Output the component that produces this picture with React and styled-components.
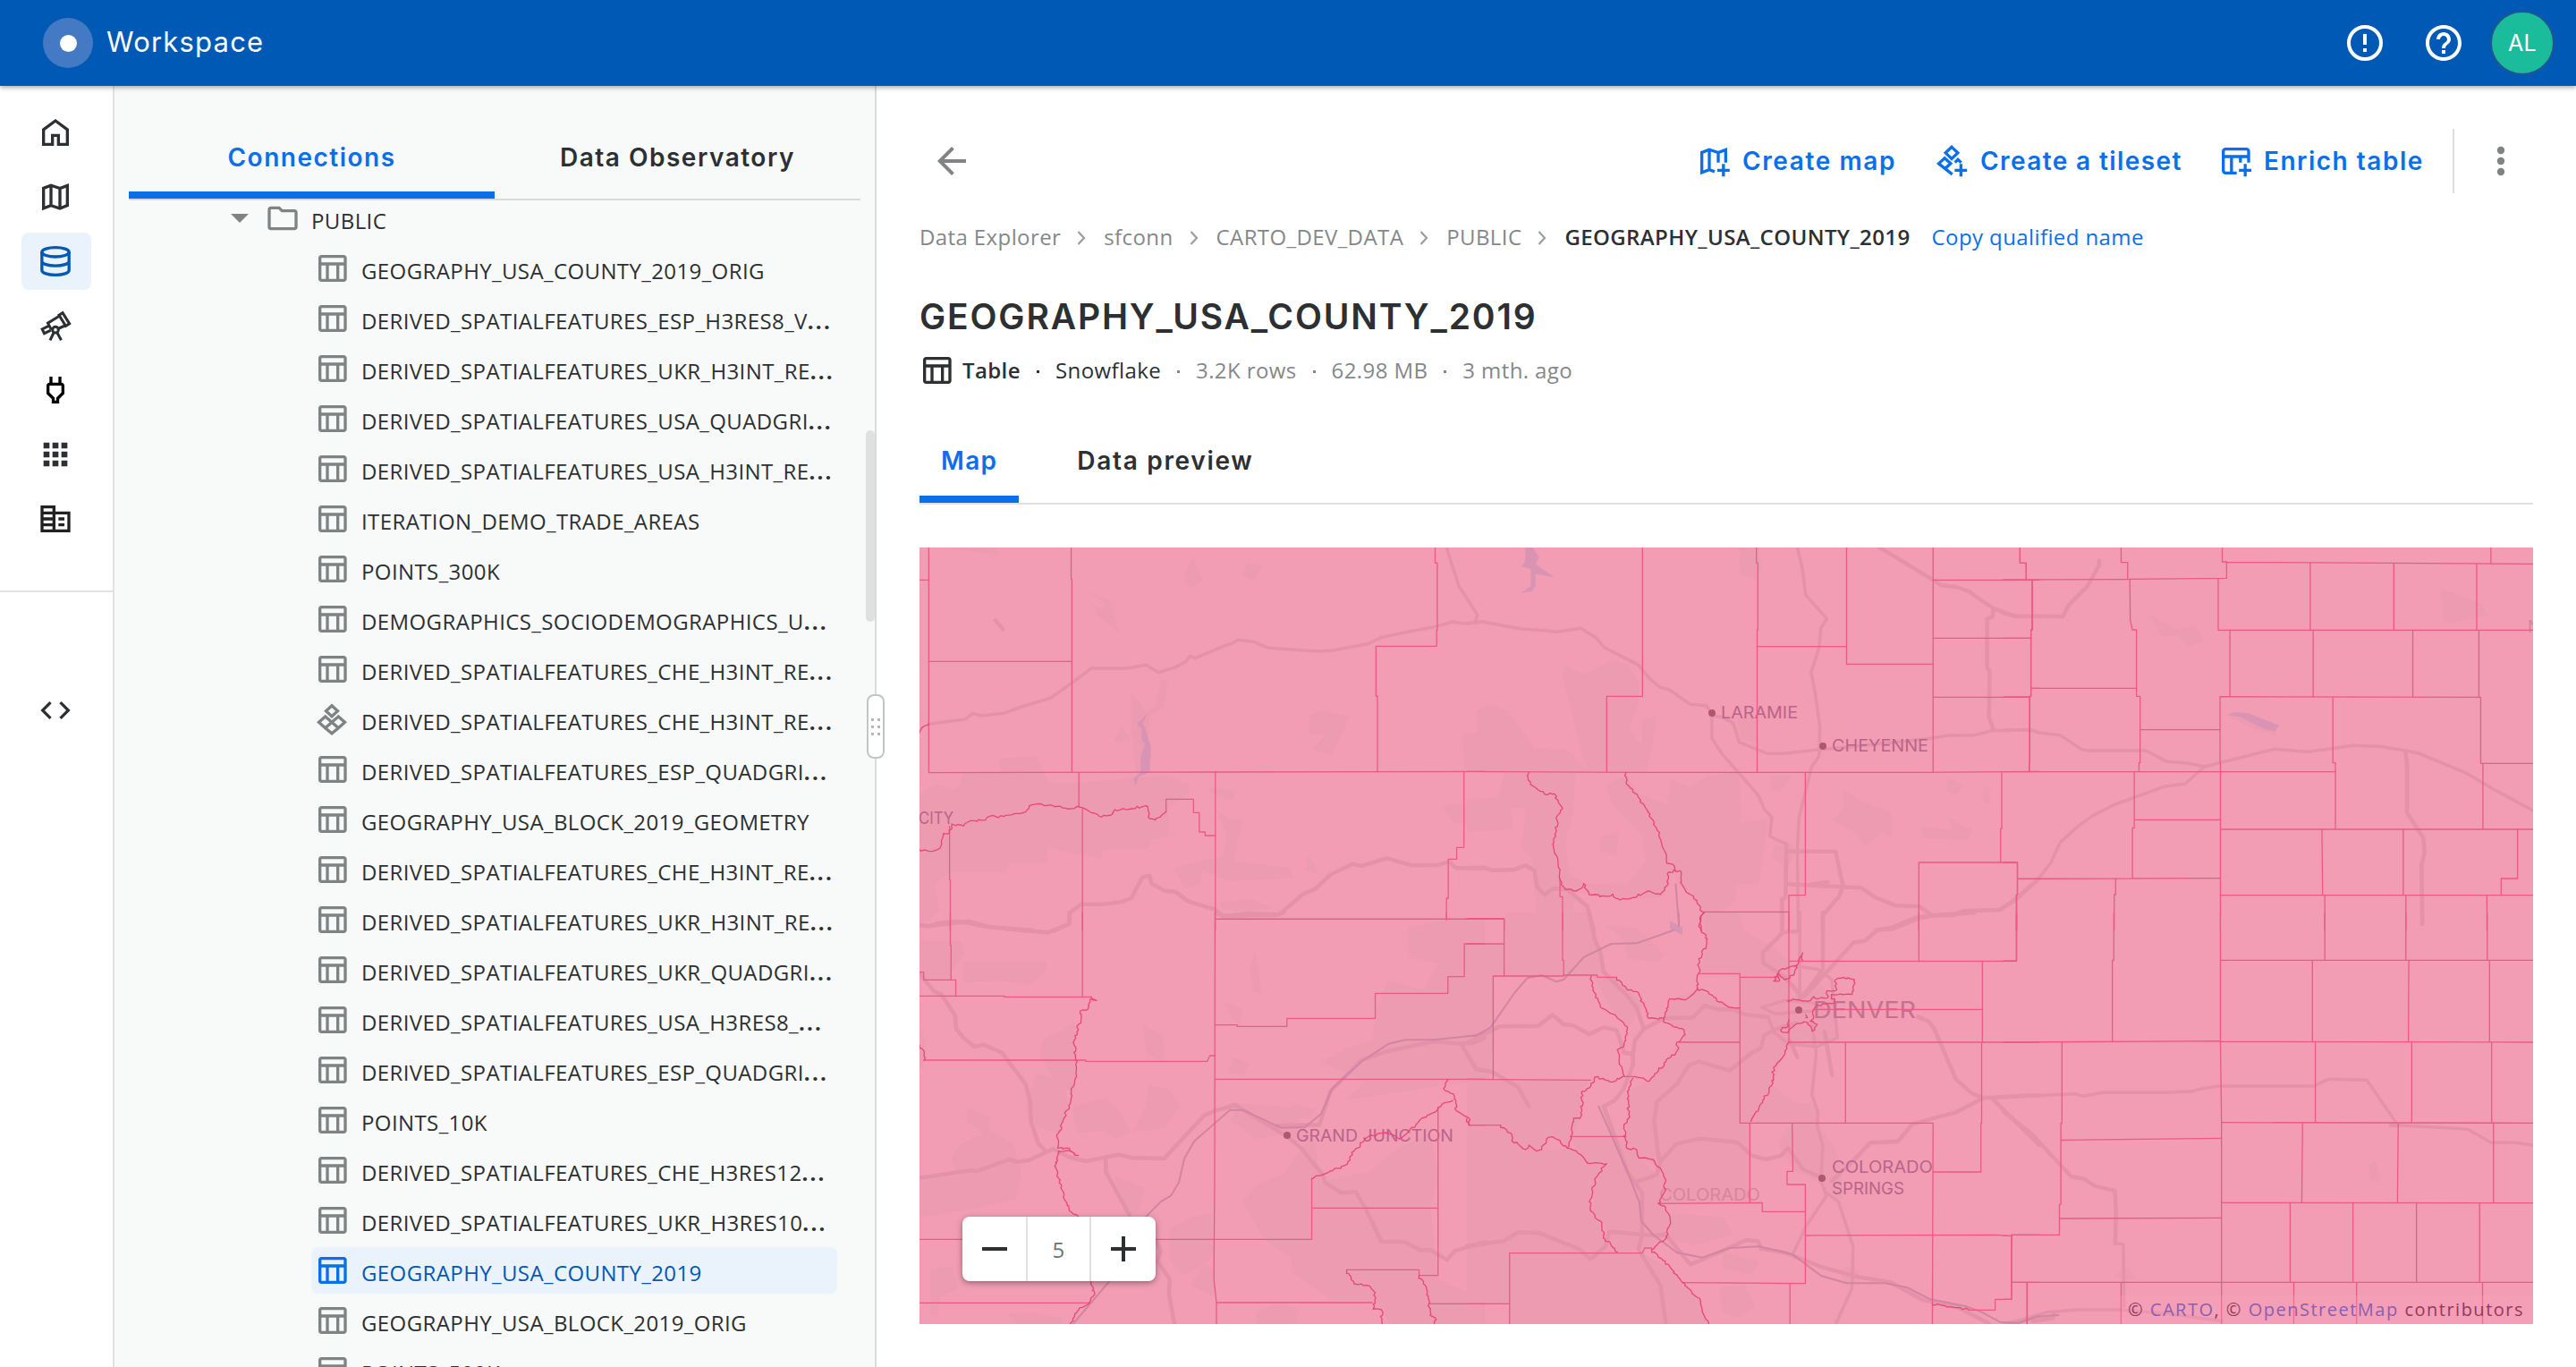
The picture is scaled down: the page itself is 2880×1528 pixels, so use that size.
import React from "react";
import styled, { createGlobalStyle, css } from "styled-components";

const GlobalStyle = createGlobalStyle`
  * { box-sizing: border-box; }
  html, body { margin: 0; padding: 0; }
  body {
    width: 2880px;
    height: 1528px;
    overflow: hidden;
    background: #fff;
    color: #2c3032;
    font-family: "Open Sans", "Noto Sans", sans-serif;
    font-size: 24px;
    letter-spacing: 0.4px;
  }
`;

const heading = css`
  font-family: "Inter", "Roboto", sans-serif;
`;

/* ---------- shell ---------- */

const Page = styled.div`
  display: flex;
  flex-direction: column;
  width: 2880px;
  height: 1528px;
  overflow: hidden;
`;

const Header = styled.header`
  display: flex;
  align-items: center;
  flex: 0 0 96px;
  padding: 0 24px 0 48px;
  background: #0059b4;
  box-shadow: 0 2px 5px rgba(44, 48, 50, 0.4);
  z-index: 2;
`;

const Logo = styled.div`
  display: flex;
  align-items: center;
  justify-content: center;
  width: 56px;
  height: 56px;
  border-radius: 50%;
  background: #447ac4;
`;

const LogoDot = styled.div`
  width: 19px;
  height: 19px;
  border-radius: 50%;
  background: #fff;
`;

const Brand = styled.div`
  ${heading}
  flex: 1;
  margin-left: 15px;
  padding-bottom: 2px;
  color: #fff;
  font-size: 31px;
  font-weight: 400;
  line-height: 40px;
  letter-spacing: 1.2px;
`;

const HeaderIcons = styled.div`
  display: flex;
  align-items: center;
  gap: 40px;
  margin-right: 28px;
  color: #fff;
`;

const Avatar = styled.div`
  ${heading}
  display: flex;
  align-items: center;
  justify-content: center;
  width: 72px;
  height: 72px;
  border: 2px solid #20578f;
  border-radius: 50%;
  background: #1abc9c;
  color: #fff;
  font-size: 25px;
`;

const Body = styled.div`
  display: flex;
  flex: 1;
  min-height: 0;
`;

/* ---------- rail ---------- */

const Rail = styled.nav`
  display: flex;
  flex-direction: column;
  flex: 0 0 128px;
  border-right: 2px solid #e1e2e2;
`;

const RailGroup = styled.div`
  display: flex;
  flex-direction: column;
  gap: 8px;
  padding: ${(p) => p.$pad}px 24px 48px;
  border-bottom: ${(p) => (p.$divided ? "2px solid #e1e2e2" : "none")};
`;

const RailItem = styled.div`
  display: flex;
  align-items: center;
  justify-content: center;
  width: 78px;
  height: 64px;
  padding-right: 2px;
  border-radius: 8px;
  background: ${(p) => (p.$active ? "#eaf2fc" : "transparent")};
  color: ${(p) => p.$color || "#2c3032"};
`;

const Icon = styled.svg`
  display: block;
  flex: none;
  width: ${(p) => p.$size || 40}px;
  height: ${(p) => p.$size || 40}px;
  fill: currentColor;
`;

const Line = styled(Icon)`
  fill: none;
  stroke: currentColor;
  stroke-width: ${(p) => p.$w || 2};
`;

const HomeIcon = () => (
  <Line viewBox="0 0 24 24"><path d="M4 20V10.1l8-5.9 8 5.9V20h-6v-6h-4v6z" /></Line>
);
const MapIcon = () => (
  <Line viewBox="0 0 24 24"><path d="M4 6.2l5-1.9 6 2 5-1.9v13.4l-5 2-6-2-5 1.9zM9 4.3v13.5M15 6.3v13.5" /></Line>
);
const DatabaseIcon = () => (
  <Line viewBox="0 0 24 24">
    <ellipse cx="12" cy="5.9" rx="9.1" ry="3.1" />
    <path d="M2.9 5.9v12.2c0 1.7 4.1 3.1 9.1 3.1s9.1-1.4 9.1-3.1V5.9M2.9 12c0 1.7 4.1 3.1 9.1 3.1s9.1-1.4 9.1-3.1" />
  </Line>
);
const TelescopeIcon = () => (
  <Line viewBox="0 0 24 24" $w={1.8}>
    <path d="M14.4 4.9l2.4-1.5 4.6 7.3-2.5 1.5zM14.6 5.6L6.9 10.3l2.3 4.3M18.4 12l-4.2 1.8M7.4 12.2l-4.3 2.1 1.4 2.9 4.4-2.1" />
    <circle cx="12" cy="14.8" r="2" />
    <path d="M10.8 16.8l-2.4 5M13.2 16.8l2.7 5" />
  </Line>
);
const PlugIcon = () => (
  <Icon viewBox="0 0 24 24"><path d="M16 9v4.66l-3.5 3.51V19h-1v-1.83L8 13.65V9h8m0-6h-2v4h-4V3H8v4h-.01C6.9 6.99 6 7.89 6 8.99v5.52L9.5 18v3h5v-3l3.5-3.51V9c0-1.1-.9-2-2-2V3z" /></Icon>
);
const AppsIcon = () => (
  <Icon viewBox="0 0 24 24"><path d="M4 8h4V4H4zm6 12h4v-4h-4zm-6 0h4v-4H4zm0-6h4v-4H4zm6 0h4v-4h-4zm6-10v4h4V4zm-6 4h4V4h-4zm6 6h4v-4h-4zm0 6h4v-4h-4z" /></Icon>
);
const BusinessIcon = () => (
  <Icon viewBox="0 0 24 24"><path fillRule="evenodd" d="M12 7V3H2v18h20V7zM10 19H4v-2h6zM10 15H4v-2h6zM10 11H4V9h6zM10 7H4V5h6zM20 19h-8V9h8zM18 11h-4v2h4zM18 15h-4v2h4z" /></Icon>
);
const CodeIcon = () => (
  <Icon viewBox="0 0 24 24"><path d="M9.4 16.6L4.8 12l4.6-4.6L8 6l-6 6 6 6 1.4-1.4zm5.2 0l4.6-4.6-4.6-4.6L16 6l6 6-6 6-1.4-1.4z" /></Icon>
);
const TableIcon = () => (
  <Icon viewBox="0 0 24 24"><path d="M20 3H5c-1.1 0-2 .9-2 2v14c0 1.1.9 2 2 2h15c1.1 0 2-.9 2-2V5c0-1.1-.9-2-2-2zm0 2v3H5V5h15zm-5 14h-5v-9h5v9zM5 10h3v9H5v-9zm12 9v-9h3v9h-3z" /></Icon>
);
const FolderIcon = () => (
  <Icon viewBox="0 0 24 24"><path d="M9.17 6l2 2H20v10H4V6h5.17M10 4H4c-1.1 0-1.99.9-1.99 2L2 18c0 1.1.9 2 2 2h16c1.1 0 2-.9 2-2V8c0-1.1-.9-2-2-2h-8l-2-2z" /></Icon>
);
const TilesetIcon = () => (
  <Line viewBox="0 0 24 24"><path d="M12 2.9l3.9 3.6-3.9 3.6-3.9-3.6zM3.3 14l4.3-3.8L12 14l-4.4 3.8zM12 14l4.4-3.8 4.3 3.8-4.3 3.8zM7.6 17.8l4.4 3.7 4.4-3.7" /></Line>
);
const AddMapIcon = () => (
  <Line viewBox="0 0 24 24"><path d="M12.6 19.1L9 17.8l-5 1.9V6.2l5-1.9 6 2 5-1.9V13M9 4.3v13.5M15 6.3V13M18.5 14v8.4M14.4 18.2h8.3" /></Line>
);
const AddTilesetIcon = () => (
  <Line viewBox="0 0 24 24"><path d="M12 2.6l4.1 3.9-4.1 3.9-4.1-3.9zM12.4 20.9L3.3 13.7l4-3.7 4 3.7-3.9 3.6M14.2 13l2-2 2.2 2M18.2 14v8.4M14 18.2h8.3" /></Line>
);
const AddTableIcon = () => (
  <Line viewBox="0 0 24 24"><path d="M13 20H5.5A1.5 1.5 0 0 1 4 18.500V5.500A1.500 1.500 0 0 1 5.500 4h14A1.500 1.500 0 0 1 21 5.500V13M4 9h17M9.500 9v11M15.500 9v4M18.700 14v8.400M14.500 18.200h8.300" /></Line>
);
const AlertIcon = () => (
  <Line viewBox="0 0 24 24" $size={48}><circle cx="12" cy="12" r="9" /><path d="M12 7v6M12 15v2" /></Line>
);
const HelpIcon = () => (
  <Icon viewBox="0 0 24 24" $size={48}><path d="M11 18h2v-2h-2v2zm1-16C6.480 2 2 6.480 2 12s4.480 10 10 10 10-4.480 10-10S17.520 2 12 2zm0 18c-4.410 0-8-3.590-8-8s3.590-8 8-8 8 3.590 8 8-3.590 8-8 8zm0-14c-2.210 0-4 1.790-4 4h2c0-1.100.900-2 2-2s2 .900 2 2c0 2-3 1.750-3 5h2c0-2.250 3-2.500 3-5 0-2.210-1.790-4-4-4z" /></Icon>
);
const BackIcon = () => (
  <Icon viewBox="0 0 24 24" $size={48}><path d="M20 11H7.830l5.590-5.590L12 4l-8 8 8 8 1.410-1.410L7.830 13H20v-2z" /></Icon>
);
const MoreIcon = () => (
  <Icon viewBox="0 0 24 24" $size={48}><circle cx="12" cy="6" r="2.100" /><circle cx="12" cy="12" r="2.100" /><circle cx="12" cy="18" r="2.100" /></Icon>
);

/* ---------- connections panel ---------- */

const Panel = styled.aside`
  position: relative;
  display: flex;
  flex-direction: column;
  flex: 0 0 852px;
  padding: 40px 16px 0;
  border-right: 2px solid #d9dbdb;
  background: #f8faf9;
`;

const PanelTabs = styled.div`
  display: flex;
  flex: 0 0 88px;
  border-bottom: 2px solid #d9dbdb;
`;

const Tab = styled.div`
  ${heading}
  display: flex;
  flex: ${(p) => (p.$fill ? "1" : "none")};
  align-items: center;
  justify-content: center;
  padding: 1px ${(p) => (p.$fill ? 0 : 24)}px 0;
  border-bottom: 8px solid ${(p) => (p.$active ? "#0a6fe8" : "transparent")};
  color: ${(p) => (p.$active ? "#0a6fe8" : "#2c3032")};
  font-size: 28px;
  font-weight: 600;
  letter-spacing: ${(p) => p.$ls}px;
  white-space: nowrap;
`;

const Tree = styled.div`
  display: flex;
  flex-direction: column;
  flex: 1;
  min-height: 0;
  overflow: hidden;
  margin-top: -8px;
`;

const FolderRow = styled.div`
  display: flex;
  align-items: center;
  flex: 0 0 56px;
  padding-left: 114px;
  color: #7f8384;
`;

const Caret = styled.div`
  width: 0;
  height: 0;
  margin-right: 18px;
  border-left: 10px solid transparent;
  border-right: 10px solid transparent;
  border-top: 10px solid #7f8384;
`;

const Row = styled.div`
  display: flex;
  align-items: center;
  flex: 0 0 52px;
  width: 588px;
  margin: 2px 0 2px 204px;
  padding-left: 3px;
  border-radius: 8px;
  background: ${(p) => (p.$active ? "#eaf2fc" : "transparent")};
  color: ${(p) => (p.$active ? "#0a6fe8" : "#7f8384")};
`;

const RowLabel = styled.span`
  margin-left: ${(p) => p.$gap || 13}px;
  padding-top: 5px;
  color: ${(p) => (p.$active ? "#0059b4" : "#2c3032")};
  font-size: 24px;
  line-height: 34px;
  white-space: nowrap;
`;

const Dots = styled.span`
  font-weight: 700;
  letter-spacing: 2.2px;
`;

const ScrollThumb = styled.div`
  position: absolute;
  top: 385px;
  right: 0;
  width: 10px;
  height: 214px;
  border-radius: 5px;
  background: #dee1e0;
`;

const Handle = styled.div`
  position: absolute;
  top: 680px;
  right: -11px;
  display: grid;
  grid-template-columns: 3px 3px;
  gap: 5px 4px;
  align-content: center;
  justify-content: center;
  width: 20px;
  height: 72px;
  border: 2px solid #c2c5c6;
  border-radius: 8px;
  background: #fff;
  z-index: 1;
`;

const Grip = styled.i`
  width: 3px;
  height: 3px;
  background: #b4b8b9;
`;

/* ---------- main ---------- */

const Main = styled.main`
  display: flex;
  flex-direction: column;
  flex: 1;
  min-width: 0;
  padding: 48px 48px 0;
`;

const Toolbar = styled.div`
  display: flex;
  align-items: center;
  flex: 0 0 72px;
  padding: 0 12px;
  color: #7f8384;
`;

const Actions = styled.div`
  display: flex;
  align-items: center;
  gap: 41px;
  height: 72px;
  margin-left: auto;
  margin-right: 28px;
  padding-right: 33px;
  border-right: 2px solid #dcdede;
  color: #0a6fe8;
`;

const Action = styled.div`
  ${heading}
  display: flex;
  align-items: center;
  gap: 12px;
  font-size: 28px;
  font-weight: 600;
  white-space: nowrap;
`;

const ActionText = styled.span`
  width: ${(p) => p.$w}px;
  letter-spacing: ${(p) => p.$ls}px;
`;

const Crumbs = styled.div`
  display: flex;
  align-items: center;
  flex: 0 0 32px;
  margin-top: 33px;
  color: #84888a;
`;

const Crumb = styled.span`
  line-height: 32px;
  white-space: nowrap;
  color: ${(p) => p.$color || "inherit"};
  font-weight: ${(p) => (p.$bold ? 600 : 400)};
  margin-left: ${(p) => p.$ml || 0}px;
`;

const ChevronSvg = styled.svg`
  width: 10px;
  height: 16px;
  margin: 1px 20px 0 18px;
  fill: none;
  stroke: #9a9da0;
  stroke-width: 2.2;
`;
const Chevron = () => (
  <ChevronSvg viewBox="0 0 10 16"><path d="M1.500 1l6.500 7-6.500 7" /></ChevronSvg>
);

const Title = styled.h1`
  ${heading}
  flex: 0 0 56px;
  margin: 45px 0 0;
  font-size: 39px;
  font-weight: 600;
  line-height: 56px;
  letter-spacing: 1.85px;
`;

const Meta = styled.div`
  display: flex;
  align-items: center;
  flex: 0 0 40px;
  margin: 12px 0 0 -1px;
  color: #84888a;
`;

const MetaText = styled.span`
  line-height: 40px;
  white-space: nowrap;
  color: ${(p) => (p.$dark ? "#2c3032" : "inherit")};
  font-weight: ${(p) => (p.$bold ? 600 : 400)};
  margin-left: ${(p) => p.$ml || 0}px;
`;

const Dot = styled.i`
  width: 3px;
  height: 3px;
  margin: 2px 18px 0;
  background: ${(p) => (p.$dark ? "#2c3032" : "#84888a")};
`;

const Tabs = styled.div`
  display: flex;
  gap: 41px;
  flex: 0 0 90px;
  margin-top: 40px;
  border-bottom: 2px solid #dfe1e1;
`;

const MapCard = styled.div`
  position: relative;
  flex: 0 0 868px;
  margin-top: 48px;
  overflow: hidden;
  background: #f29db4;
`;

const MapSvg = styled.svg`
  display: block;
  width: 1804px;
  height: 868px;
  letter-spacing: 0;
`;

const ZoomBox = styled.div`
  position: absolute;
  left: 48px;
  bottom: 48px;
  display: flex;
  width: 216px;
  height: 72px;
  border-radius: 8px;
  background: #fff;
  box-shadow: 0 2px 6px rgba(44, 48, 50, 0.5);
`;

const ZoomCell = styled.div`
  display: flex;
  align-items: center;
  justify-content: center;
  flex: 0 0 ${(p) => p.$w}px;
  color: ${(p) => (p.$muted ? "#6b7275" : "#2c3032")};
  border-left: ${(p) => (p.$muted ? "2px solid #dfe1e1" : "none")};
  border-right: ${(p) => (p.$muted ? "2px solid #dfe1e1" : "none")};
  font-size: 24px;
`;

const ZoomGlyph = ({ plus }) => (
  <Line viewBox="0 0 28 28" $size={28} $w={4}><path d={plus ? "M0 14h28M14 0v28" : "M0 14h28"} /></Line>
);

const Attribution = styled.div`
  position: absolute;
  right: 0;
  bottom: 0;
  height: 32px;
  padding: 0 10px 0 8px;
  background: rgba(255, 160, 190, 0.28);
  color: #903c59;
  font-size: 20px;
  line-height: 32px;
  letter-spacing: 1.500px;
  white-space: nowrap;
`;

const Credit = styled.span`
  color: #8a60ae;
`;

/* ---------- map data ---------- */

// Each tile has its own anisotropic grid: 2.45 units per px across, 3 down.
const TILES = [
  {
    x: 1020, y: 600,
    land: ["75 36 230 36 235 62 130 42", "770 72 795 145 760 172 744 150 750 110", "917 88 958 98 936 150 905 130", "450 168 540 215 568 325 505 262 496 230 530 245 520 212", "1088 600 1120 582 1198 602 1148 733 1098 712 1130 665 1088 665", "600 520 640 585 665 570 682 480 700 478 690 570 650 600 640 790 612 790 600 640", "572 632 598 680 550 688", "240 742 340 736 372 822 460 824 690 800 757 828 757 860 700 910 700 1005 655 1015 645 1050 520 1050 518 1080 370 1042 370 1092 260 1098 258 1125 102 1125 60 1165 74 1255 40 1290 20 1290 20 860 65 830 118 850 145 790 240 790", "716 1110 850 1070 890 1090 1033 1110 1046 1143 870 1155 790 1120 790 1165 745 1175", "808 840 882 852 882 885 831 870", "831 915 870 945 903 950 880 1100 848 1090 862 1000", "1085 1065 1112 1130 1075 1120", "1568 570 1545 605 1552 655 1508 660 1512 780 1568 790", "1568 880 1452 902 1485 960 1568 968", "840 1225 930 1215 985 1245 920 1258 850 1250"],
    water: ["645 590 632 625 640 650 654 705 650 790 620 805 612 835 605 810 625 790 625 740 637 695 628 680 628 645 615 628"],
    roads: ["45 628 145 612 165 592 190 600 250 592 300 570 380 540 437 490 490 441 590 441 640 430 675 455 720 438 750 418 760 400 775 407 850 368 880 355 890 346 935 352 975 373 1110 384 1150 381 1245 360 1285 338 1350 320 1430 302 1480 285 1510 291 1568 286", "1463 36 1497 165 1548 262 1540 288"],
    wide: ["20 1300 45 1307 70 1296 120 1290 160 1296 200 1307 330 1320", "390 1320 430 1298 430 1262 462 1232 520 1232 570 1225 600 1212 630 1142 650 1137 655 1162 690 1187 720 1190 755 1222 830 1250 850 1272 920 1264 1005 1267 1070 1198 1105 1180 1145 1133 1205 1097 1230 1104 1300 1078 1370 1102 1440 1100 1470 1090 1490 1111 1568 1110", "228 280 248 310"],
    lines: ["M45 36V791L831 789 1568 787", "M20 145H45", "M435 36V142H437V790", "M45 418H437", "M1432 36V88H1438V312H1436V367H1270V534H1274V787", "M456 790V907M466 910V1320", "M102 970V1150H104V1320", "M830 787V1320", "M1511 787V1042H1491V1081H1468V1212H1463V1284", "M831 1282H1568", "M695 922V880H770V925H786V990H802V1002H830"],
    rough: ["20 658 32 635 45 628", "20 1049 50 1055 75 1045 85 995 102 992 108 963 140 970 160 952 200 950 210 938 250 938 310 923 320 902 350 895 390 905 420 910 456 905 490 925 512 938 550 928 555 915 600 912 640 902 650 945 665 950 695 922"],
  },
  {
    x: 1640, y: 600,
    land: ["268 432 322 463 395 415 440 428 475 490 470 560 443 642 480 700 490 790 330 790 262 470", "480 610 520 603 505 720 490 790 480 790", "0 660 40 655 25 585 65 562 112 585 185 708 275 712 330 787 0 787", "745 36 800 36 808 100 795 145 750 128", "795 605 795 690 750 680 740 610", "105 790 298 790 290 930 270 1010 280 1130 330 1165 440 1162 490 1090 480 1000 400 900 380 830 440 800 470 860 550 900 560 815 610 840 660 800 746 790 750 960 825 945 800 1165 740 1165 735 1220 690 1270 645 1257 600 1190 560 1125 540 1210 430 1215 300 1190 290 1260 190 1260 180 1080 150 1045 162 910 118 905 126 980 0 990 0 880 85 875", "365 1005 417 990 410 1070 365 1050", "840 1040 890 1030 900 1060 880 1108 835 1080", "1030 845 1075 885 1160 920 1165 1010 1140 990 1090 1035 1060 990 1000 950 1035 910", "1245 972 1330 985 1320 945 1385 985 1370 1015 1250 1010", "1320 810 1360 830 1340 868 1312 850", "1415 830 1435 850 1430 900 1415 890", "685 1150 720 1210 700 1255 660 1150", "830 800 890 800 860 855 835 850"],
    water: ["160 36 180 36 198 68 188 92 240 136 188 125 188 165 178 183 147 189 175 165 175 108 150 100 160 80", "557 1288 590 1310 590 1335 557 1315"],
    roads: ["0 290 40 284 145 308 210 314 248 319 312 307 355 340 375 370 470 430 500 475 530 505 555 513 612 562 655 566 671 592", "671 600 671 675 700 730 740 785 800 870 815 915 835 940 830 1005 875 1030", "700 605 730 625 745 688 820 726 870 727 960 714 1000 710 1260 678 1320 666 1390 665 1440 650 1540 648 1568 656", "905 36 918 100 928 195 986 275 970 305 965 370 943 455 955 530 967 640 965 735 945 770 910 940 905 1050 908 1320", "671 600 700 605"],
    wide: ["875 1030 873 1210 863 1215 863 1320", "1130 36 1170 65 1277 145 1300 163 1340 168 1375 183 1420 222 1442 240 1440 268 1425 275 1425 440 1432 450 1430 605 1442 645", "1442 240 1500 266 1568 266", "875 1055 1010 1055 1030 1170 1020 1205 975 1270 975 1320", "875 1165 1080 1177 1120 1210 1175 1237 1240 1240 1275 1270 1335 1268 1360 1255 1460 1251 1505 1215 1568 1145", "1275 1270 1230 1277 1160 1312 1120 1320", "940 1166 988 1158", "0 1112 45 1110 70 1118 130 1116 160 1102 185 1118 192 1175 213 1200 235 1180 275 1183 330 1240 348 1320"],
    rail: ["572 1165 581 1305"],
    lines: ["M0 787L480 790H1240L1568 787", "M481 36V535H383V790", "M793 36V88H797V312H795V790", "M795 368H1040M1040 36V427H1277", "M1277 36V787", "M1277 145H1568M1515 36V88H1532V145", "M1549 145V312H1545V535H1541V787", "M1277 340H1545M1277 538H1541M1546 508H1568", "M255 1145V1207H262V1320", "M927 790V1202H882V1320", "M645 1258H882", "M1465 790V979H1462V1092M1238 1320V1092H1508V1200H1505V1320M1508 1147H1568", "M0 1280H102V1320"],
    rough: ["170 790 168 815 180 835 200 853 220 865 240 862 250 890 262 912 248 935 245 985 235 1030 250 1100 255 1150 270 1183 300 1188 320 1163 335 1200 380 1205 400 1198 420 1218 455 1210 500 1188 530 1200 548 1170 552 1125 567 1117 587 1125 585 1160 600 1190 630 1220 645 1257", "436 790 438 830 460 860 490 910 520 980 540 1050 548 1095 565 1100 570 1117", "650 1260 638 1280 641 1320"],
  },
  {
    x: 2240, y: 600,
    land: ["400 260 475 312 528 298 546 348 508 370 475 330 432 334", "1197 173 1312 225 1326 264 1206 292", "612 600 650 608 748 652 745 665 690 648"],
    water: ["612 598 630 588 670 592 755 632 743 652 715 646 650 605"],
    roads: ["0 648 75 648 97 657 155 665 212 712 230 717 390 717 448 754 510 760 550 771 740 712 830 721 900 710 955 700 1030 703 1100 717 1135 725 1270 794 1340 845 1450 918", "550 771 498 828 440 838 360 873 300 900 245 935 205 970 155 1025 130 1092 97 1145 40 1205 0 1245"],
    wide: ["0 256 35 267 162 267 178 230 230 165 262 95 262 80", "1100 717 1105 760 1105 925 1150 1010 1153 1060 1145 1100 1147 1298"],
    lines: ["M45 36V88H62V145", "M0 144L346 143", "M322 36V86H340V142", "M346 142L611 139V84H599V36M611 85L1450 91", "M1335 36V88", "M78 145V312H75V535H72V760H70V787", "M0 340H75M0 537H72", "M346 143L347 280 353 312H364V535H374V758H371V787", "M75 508H364", "M588 141V313H1450M840 88V313M1069 90V313M1296 92V313", "M620 313V535M848 313V536M1121 313V537M1302 315V538", "M594 787V758H593V536L1307 538V760H1450", "M902 538V758H909V980M1313 760V980", "M374 647H592", "M0 788H909M594 787V1320M594 981H1450", "M872 981L874 1202M1095 981V1202M1408 981V1146H1363V1202M594 1202H1450", "M358 788V976H353V1145M358 949H594M38 1147L594 1145", "M0 1092H38V1200H36V1320M307 1146V1200H303V1320M880 1202V1320M1102 1202V1320M1324 1202V1320"],
    rough: [],
  },
  {
    x: 1020, y: 1020,
    land: ["20 95 130 95 142 140 110 190 100 225 20 225", "143 165 367 165 367 195 320 243 240 228 143 235", "20 375 38 440 40 490 20 535", "150 655 215 690 210 730 275 770 300 870 285 960 180 990 90 1010 20 1020 20 900 130 880 105 830 130 780 195 740 150 700", "340 540 400 560 430 640 400 740 340 720 310 650", "440 650 530 620 570 670 600 740 640 650 645 580 700 590 735 645 690 725 600 735 560 760 520 730 450 740", "630 375 685 410 688 498 645 480", "355 430 445 370 445 600 400 590 350 480", "940 125 957 272 935 265 925 185", "855 300 908 325 895 378 870 345", "880 485 922 505 905 545 862 535", "1358 50 1463 25 1568 25 1568 560 1190 625 1240 570 1190 540 1120 500 1190 455 1260 430 1268 340 1300 230 1400 260 1440 170 1358 150", "1180 630 1400 590 1400 560 1300 555", "905 970 945 910 1015 880 1075 770 1020 740 940 760 900 720 870 700 900 640 1030 650 1100 760 1120 900 1250 870 1330 790 1420 740 1440 900 1420 990 1440 1230 1568 1300 1568 1380 1310 1380 1268 1300 1150 1300 1040 1205 1040 1160 960 1090", "1040 1100 1180 1075 1175 1150 1230 1200 1268 1275 1150 1300 1040 1200", "702 1060 770 1020 820 1010 825 1150 800 1180 740 1215 705 1160", "50 1200 110 1185 125 1260 75 1290 70 1350 50 1350", "760 1250 800 1180 830 1200 830 1290", "550 880 635 925 625 990 600 1015 570 950", "940 1340 1000 1312 1060 1330 1050 1380 945 1380", "260 1345 330 1340 410 1360 410 1380 290 1380", "1040 640 1105 660 1090 690 1030 690"],
    water: [],
    wide: ["20 42 45 45 155 30 205 47 300 60 370 67 430 38 432 0", "20 205 60 265 80 275 117 345 120 390 140 420 170 450 195 443 245 470 310 575 322 630 325 700 345 775 365 800", "20 890 160 865 178 867 265 828 285 836 320 830 385 793 430 820 475 834 565 812 600 822 690 825 735 765 800 680 830 665 885 645 930 680 1026 750 1065 790 1125 880 1130 905 1175 940 1215 937 1240 990 1285 1103 1350 1105 1390 1132 1420 1132 1465 1165 1485 1135 1568 1105", "530 820 530 870 595 1015", "668 1100 680 1135 672 1170 705 1230 703 1280 718 1380", "1000 715 1115 712 1145 600 1230 495 1300 465 1430 432 1500 440 1540 436 1568 420", "1505 445 1545 525 1568 530", "835 5 860 12 1000 8 1018 0"],
    roads: [],
    rail: ["640 1020 680 970 708 950 730 905 745 825 772 767 870 662 905 662 1010 722 1075 720 1120 675 1150 590 1230 500 1305 440 1350 427 1430 427 1545 412 1568 398", "540 1236 440 1380"],
    lines: ["M20 280H252V283H490", "M104 0V110H106V225M466 0V283", "M20 200H31V226H119V280", "M829 0L828 900 826 1230 833 1308V1380M830 22H1568", "M1463 0V24M1568 105H1512V215H1467V271H1268V355H1026V382H890V377H830", "M31 495H475V499H808L815 480H830", "M830 559H1568", "M20 1096H1094V892M1094 991H1440M1440 652V1217H1388V1198H1190", "M20 1309H485M833 1308H1260M1415 1312H1568M1525 713H1568"],
    rough: ["20 445 33 470 33 495", "490 283 505 295 487 290 480 325 460 330 462 360 455 375 443 430 448 495 450 550 435 590 433 640 415 690 400 740 398 790 430 790 455 815 435 800 400 800 398 830 390 850 400 890 410 930 418 965 430 1000 455 1020 460 1100 475 1180 490 1240 500 1280 485 1310 445 1345 432 1380", "1094 892 1185 848 1210 800 1250 750 1300 738 1335 760 1380 710 1440 655 1480 630", "1468 560 1455 590 1485 615 1490 665 1525 690 1525 713", "1190 1198 1210 1245 1245 1250 1268 1275 1262 1330 1285 1332 1287 1380", "1388 1217 1405 1250 1415 1312 1418 1350 1435 1365 1430 1380"],
  },
  {
    x: 1640, y: 1020,
    land: ["0 105 102 105 105 213 72 213 72 440 60 559 0 559", "0 562 340 562 315 600 310 690 275 790 235 752 190 800 160 795 92 713 0 713", "0 713 92 713 190 800 275 790 383 842 335 970 378 1095 413 1140 117 1142 117 1312 0 1312", "117 1142 480 1142 560 1195 640 1305 663 1380 117 1380", "262 0 335 0 350 90 365 130 375 200 357 210 265 210", "105 0 262 0 262 210 105 213", "345 213 410 217 485 310 440 385 410 350", "378 40 470 55 540 140 520 165 440 155 430 90", "650 0 745 0 760 60 830 110 882 160 882 215 748 217 637 205 655 120", "555 290 632 260 748 330 748 435 590 435 598 400 540 360", "500 565 580 435 748 435 748 706 775 706 775 973 700 973 524 975 545 900 520 850 470 822 438 790 440 600", "285 751 437 751 470 822 545 900 524 975 557 1030 548 1090 487 1125 413 1140 370 1040 345 1005 350 895 383 842 300 800", "748 217 882 217 882 435 865 485 748 480", "748 480 865 485 835 580 900 640 960 640 960 706 748 706", "882 290 960 230 1010 300 1010 430 930 450 882 430", "850 770 891 707 960 700 1020 820 1030 960 1000 960 960 900 900 870", "557 1010 700 1020 730 1080 620 1115 545 1090", "690 1255 760 1250 790 1320 740 1360 700 1340", "700 1140 800 1170 780 1215 700 1190", "1022 1200 1060 1180 1080 1230 1040 1250"],
    water: ["557 30 590 50 590 75 557 55"],
    roads: ["912 0 912 290", "945 370 957 470 945 610 962 670 960 720 975 780 970 900 985 950 930 1050 895 1140", "985 940 1018 970 1058 1120 1055 1260 1010 1380", "808 318 870 295 940 300 990 330", "808 318 845 340 950 330", "900 180 960 190 1000 225 1005 300 1015 420 960 450 880 440 840 400 825 350"],
    wide: ["0 437 90 382 195 380 235 343 265 375 290 378 335 408 375 385 410 395 420 430 430 470 455 475 460 430 485 390 540 355 620 352 650 312 690 325 730 325 760 342 825 350", "335 0 350 90 365 130 375 200 440 280 465 320 485 390", "455 475 455 510 430 590 405 630 375 650 440 870 480 940 480 1080 470 1130 530 1250 545 1380", "0 475 25 525 70 535 140 585 170 650", "0 1118 100 1102 140 1072 200 1075 310 1130 338 1163 380 1120 390 1070 510 1083 545 1080 612 1180 690 1140 765 1098 798 1102 805 1127 870 1140 975 1190 1065 1220 1160 1240 1250 1300 1330 1315 1430 1378", "863 0 863 70 810 135 812 170 870 215 912 275", "863 66 912 62", "975 0 975 190 915 290", "1390 0 1275 10 1238 20 1165 55 1125 58 1090 95 1060 100 1000 180 925 280", "900 370 850 390 815 410 805 455 780 470 720 530 635 500 608 512 575 575 520 635 513 700 525 820 530 835", "460 905 520 880 530 835 575 775 640 758 740 770 780 815 820 828 860 815 880 790 920 860 972 890", "1235 350 1265 365 1280 390 1340 560 1385 608 1415 622 1340 670 1300 682 1220 710 1180 768 1105 772 1060 830 1000 900", "1415 622 1568 612", "1440 625 1568 780", "980 400 1000 545", "885 430 905 485"],
    rail: ["0 415 25 413 65 385 130 270 165 220 205 210 245 232 265 225 320 150 395 105 465 103 565 60", "580 0 581 45", "361 650 440 870 472 970 478 1035 510 1080 575 1140 645 1157 720 1125 800 1120 890 1145 970 1218 1040 1243 1145 1243 1205 1257 1270 1297 1365 1320 1410 1340 1460 1373 1510 1378 1568 1353"],
    lines: ["M0 22H102V213", "M0 105H102M72 559V213H265M262 0V160H265V210H357V217H410", "M0 559L340 562", "M637 205H748V706H1277M748 217H850", "M580 435H748", "M882 0V435M882 163H1505V0M1238 0V160M1412 163V433M950 325H1412M882 435H1568M1037 435V706M1410 435V706H1408V870H1277M1277 707L1275 1380", "M775 706V973M524 976L809 973V1003H927M891 707L893 868H877V912H927V1244M885 1244V1380M590 1241L927 1244", "M927 1083L1450 1081 1492 1085V1297H1447V1333H1375M1492 1081H1568", "M1492 1240H1568M1534 1240V1380", "M117 1380V1142H480L487 1125H506M0 1312H117", "M8 713H92M283 751H437M427 550H460"],
    rough: ["341 213 345 260 365 315 410 350 440 385 430 450 412 460 418 510 432 550", "410 217 440 260 465 265 485 310 498 355 540 355 555 290 600 292 630 260 635 205 635 155 655 120 655 75 638 50 641 20 650 0", "632 255 660 265 690 300 720 318 748 320", "540 355 545 370 595 395 598 410 575 435 578 460 545 500 525 530 500 565 460 550", "427 550 400 568 350 552 340 580 315 600 315 660 310 690 292 690 285 750 275 790", "455 555 440 600 443 690 430 720 438 790 465 795 470 822 510 828 520 850 535 870 545 900 540 940 524 975 545 990 557 1030 548 1090 506 1130", "882 435 865 485 840 520 835 580 800 655 778 700", "1275 1312 1300 1317 1340 1325 1375 1333", "506 1130 560 1195 590 1240 640 1305 645 1340 663 1380", "0 690 8 713", "92 713 123 745 123 765 160 795 170 780 190 800 205 795 218 760 235 752 275 790 300 800 330 840 383 842 350 895 345 940 335 970 345 1005 370 1040 378 1095 413 1140", "878 295 910 292 935 298 950 282 960 290 987 287 987 262 1010 262 1010 225 1030 217 1062 225 1055 275 998 275 998 290 1008 290 1005 305 960 310 950 325 950 352 940 365 960 375 945 398 935 370 905 372 885 390 878 403 862 400 865 385 882 380 882 360", "920 160 920 135 912 150 905 175 880 185 855 195 840 230 855 230 850 205 870 225 895 210 905 175", "928 343 933 352 928 353"],
  },
  {
    x: 2240, y: 1020,
    land: ["1020 832 1036 905 1002 895 1002 845", "305 1215 340 1190 362 1225 330 1235"],
    water: [],
    roads: ["0 620 195 608 220 616 270 604 440 604 515 600 545 590 590 582 850 582 890 559 995 562 1080 713 1270 726 1335 771 1400 772 1450 780", "0 1378 20 1375 120 1340 200 1332 315 1332 450 1345 600 1370", "306 1110 328 1112 330 1320"],
    wide: ["0 668 75 740 185 885 220 893 250 917 305 933 308 1000 306 1110", "1147 0 1147 38", "1060 713 1080 713", "80 1370 135 1360 138 1345"],
    rail: ["0 1374 40 1376 90 1355 150 1350"],
    lines: ["M0 162H36V0", "M302 0V160H298V433", "M594 0V435L597 705V1380", "M594 160H1450M846 160V433M1110 160L1109 433M1331 160V433M880 0V160M1102 0V160M1325 0V160", "M0 435L594 431M595 433L1450 435M854 433V703M1118 433V703M1337 435V703", "M160 435V707H157V979H153V1081H22V1297H0", "M157 763L597 757M597 704L1450 706M819 704L817 971M1081 706L1079 971M1342 706V972M597 973L1450 974", "M785 973V1240M957 973V1240M1131 973V1240M1304 973V1240", "M153 1026L597 1024M0 1084H22M22 1240H1450M65 1240V1380M322 1240V1380M795 1242V1380M967 1242V1380M1312 1242V1380"],
    rough: [],
  },
];

const pairs = (s) => {
  const n = s.split(" ").map(Number);
  const out = [];
  for (let i = 0; i < n.length; i += 2) out.push([n[i], n[i + 1]]);
  return out;
};

// River borders meander: subdivide each leg and nudge the midpoints.
const meander = (s) => {
  const pts = pairs(s);
  let seed = 7;
  const rnd = () => {
    seed = (seed * 16807) % 2147483647;
    return seed / 2147483647 - 0.5;
  };
  const out = [pts[0]];
  for (let i = 1; i < pts.length; i++) {
    const [ax, ay] = pts[i - 1];
    const [bx, by] = pts[i];
    const steps = Math.max(1, Math.round(Math.hypot(bx - ax, by - ay) / 8));
    for (let k = 1; k < steps; k++) {
      out.push([ax + ((bx - ax) * k) / steps + rnd() * 8, ay + ((by - ay) * k) / steps + rnd() * 9]);
    }
    out.push([bx, by]);
  }
  return out.map((p) => p.map((v) => v.toFixed(1)).join(",")).join(" ");
};

const LayerGroup = styled.g`
  fill: ${(p) => p.$fill || "none"};
  stroke: ${(p) => p.$stroke || "none"};
  stroke-width: ${(p) => p.$w || 1};
  stroke-linecap: round;
  stroke-linejoin: round;
  & * { vector-effect: non-scaling-stroke; }
`;

const Layer = ({ pick, render, ...style }) => (
  <LayerGroup {...style}>
    {TILES.map((t) => (
      <g key={`${t.x}-${t.y}`} transform={`translate(${t.x - 1028} ${t.y - 612}) scale(${1 / 2.45} ${1 / 3})`}>
        {(t[pick] || []).map((d) => render(d))}
      </g>
    ))}
  </LayerGroup>
);

const PLACES = [
  { t: "LARAMIE", x: 896, y: 191, w: 86, s: 18.5, dot: [886, 185] },
  { t: "CHEYENNE", x: 1020, y: 228, w: 108, s: 18.5, dot: [1010, 222] },
  { t: "CITY", x: -1, y: 309, w: 39, s: 18.5 },
  { t: "GRAND JUNCTION", x: 421, y: 664, w: 176, s: 18.5, dot: [411, 657] },
  { t: "COLORADO", x: 1020, y: 699, w: 113, s: 18.5, dot: [1009, 705] },
  { t: "SPRINGS", x: 1020, y: 723, w: 81, s: 18.5 },
  { t: "DENVER", x: 999, y: 526, w: 115, s: 26, c: "#c4708f", dot: [983, 517] },
  { t: "COLORADO", x: 827, y: 730, w: 113, s: 18.5, c: "#d9849f" },
  { t: "N", x: 1798, y: 95, w: 14, s: 18, c: "#d9849f" },
];

const Place = styled.text`
  font-family: "Inter", sans-serif;
  font-size: ${(p) => p.$s}px;
  fill: ${(p) => p.$c || "#b9648a"};
`;

const CountyMap = () => (
  <MapSvg viewBox="0 0 1804 868">
    <Layer pick="land" $fill="#ed9bb1" render={(d) => <polygon key={d} points={d} />} />
    <Layer pick="water" $fill="#da94b3" render={(d) => <polygon key={d} points={d} />} />
    <Layer pick="roads" $stroke="#e591aa" $w={3.5} render={(d) => <polyline key={d} points={d} />} />
    <Layer pick="wide" $stroke="#e591aa" $w={4.5} render={(d) => <polyline key={d} points={d} />} />
    <Layer pick="rail" $stroke="#d086a2" $w={2} render={(d) => <polyline key={d} points={d} />} />
    {PLACES.map((p) => (
      <g key={p.t + p.y}>
        {p.dot && <circle cx={p.dot[0]} cy={p.dot[1]} r="4" fill="#b05672" />}
        <Place x={p.x} y={p.y} textLength={p.w} lengthAdjust="spacingAndGlyphs" $s={p.s} $c={p.c}>{p.t}</Place>
      </g>
    ))}
    <Layer pick="lines" $stroke="#ea5a84" $w={1.3} render={(d) => <path key={d} d={d} />} />
    <Layer pick="rough" $stroke="#e84775" $w={1.3} render={(d) => <polyline key={d} points={meander(d)} />} />
  </MapSvg>
);

/* ---------- content ---------- */

const TABLES = [
  ["GEOGRAPHY_USA_COUNTY_2019_ORIG"],
  ["DERIVED_SPATIALFEATURES_ESP_H3RES8_V", 1],
  ["DERIVED_SPATIALFEATURES_UKR_H3INT_RE", 1],
  ["DERIVED_SPATIALFEATURES_USA_QUADGRI", 1],
  ["DERIVED_SPATIALFEATURES_USA_H3INT_RE", 1],
  ["ITERATION_DEMO_TRADE_AREAS"],
  ["POINTS_300K"],
  ["DEMOGRAPHICS_SOCIODEMOGRAPHICS_U", 1],
  ["DERIVED_SPATIALFEATURES_CHE_H3INT_RE", 1],
  ["DERIVED_SPATIALFEATURES_CHE_H3INT_RE", 1, "tileset"],
  ["DERIVED_SPATIALFEATURES_ESP_QUADGRI", 1],
  ["GEOGRAPHY_USA_BLOCK_2019_GEOMETRY"],
  ["DERIVED_SPATIALFEATURES_CHE_H3INT_RE", 1],
  ["DERIVED_SPATIALFEATURES_UKR_H3INT_RE", 1],
  ["DERIVED_SPATIALFEATURES_UKR_QUADGRI", 1],
  ["DERIVED_SPATIALFEATURES_USA_H3RES8_", 1],
  ["DERIVED_SPATIALFEATURES_ESP_QUADGRI", 1],
  ["POINTS_10K"],
  ["DERIVED_SPATIALFEATURES_CHE_H3RES12", 1],
  ["DERIVED_SPATIALFEATURES_UKR_H3RES10", 1],
  ["GEOGRAPHY_USA_COUNTY_2019", 0, "active"],
  ["GEOGRAPHY_USA_BLOCK_2019_ORIG"],
  ["POINTS_500K"],
];

export default function App() {
  return (
    <Page>
      <GlobalStyle />
      <Header>
        <Logo><LogoDot /></Logo>
        <Brand>Workspace</Brand>
        <HeaderIcons><AlertIcon /><HelpIcon /></HeaderIcons>
        <Avatar>AL</Avatar>
      </Header>
      <Body>
        <Rail>
          <RailGroup $pad={20} $divided>
            <RailItem><HomeIcon /></RailItem>
            <RailItem><MapIcon /></RailItem>
            <RailItem $active $color="#0059b4"><DatabaseIcon /></RailItem>
            <RailItem><TelescopeIcon /></RailItem>
            <RailItem $color="#000"><PlugIcon /></RailItem>
            <RailItem><AppsIcon /></RailItem>
            <RailItem $color="#222"><BusinessIcon /></RailItem>
          </RailGroup>
          <RailGroup $pad={100}>
            <RailItem><CodeIcon /></RailItem>
          </RailGroup>
        </Rail>
        <Panel>
          <PanelTabs>
            <Tab $fill $active $ls={1.5}>Connections</Tab>
            <Tab $fill $ls={1.5}>Data Observatory</Tab>
          </PanelTabs>
          <Tree>
            <FolderRow>
              <Caret />
              <FolderIcon />
              <RowLabel $gap={12}>PUBLIC</RowLabel>
            </FolderRow>
            {TABLES.map(([name, cut, kind], i) => (
              <Row key={i} $active={kind === "active"}>
                {kind === "tileset" ? <TilesetIcon /> : <TableIcon />}
                <RowLabel $active={kind === "active"}>
                  {name}
                  {cut ? <Dots>...</Dots> : null}
                </RowLabel>
              </Row>
            ))}
          </Tree>
          <ScrollThumb />
          <Handle>{[0, 1, 2, 3, 4, 5].map((i) => <Grip key={i} />)}</Handle>
        </Panel>
        <Main>
          <Toolbar>
            <BackIcon />
            <Actions>
              <Action><AddMapIcon /><ActionText $w={173} $ls={1.6}>Create map</ActionText></Action>
              <Action><AddTilesetIcon /><ActionText $w={224} $ls={1.4}>Create a tileset</ActionText></Action>
              <Action><AddTableIcon /><ActionText $w={178} $ls={1.5}>Enrich table</ActionText></Action>
            </Actions>
            <MoreIcon />
          </Toolbar>
          <Crumbs>
            <Crumb>Data Explorer</Crumb>
            <Chevron />
            <Crumb>sfconn</Crumb>
            <Chevron />
            <Crumb>CARTO_DEV_DATA</Crumb>
            <Chevron />
            <Crumb>PUBLIC</Crumb>
            <Chevron />
            <Crumb $bold $color="#2c3032">GEOGRAPHY_USA_COUNTY_2019</Crumb>
            <Crumb $ml={24} $color="#0a6fe8">Copy qualified name</Crumb>
          </Crumbs>
          <Title>GEOGRAPHY_USA_COUNTY_2019</Title>
          <Meta>
            <MetaText $dark><TableIcon /></MetaText>
            <MetaText $dark $bold $ml={9}>Table</MetaText>
            <Dot $dark />
            <MetaText $dark>Snowflake</MetaText>
            <Dot />
            <MetaText>3.2K rows</MetaText>
            <Dot />
            <MetaText>62.98 MB</MetaText>
            <Dot />
            <MetaText>3 mth. ago</MetaText>
          </Meta>
          <Tabs>
            <Tab $active $ls={1.3}>Map</Tab>
            <Tab $ls={1.7}>Data preview</Tab>
          </Tabs>
          <MapCard>
            <CountyMap />
            <ZoomBox>
              <ZoomCell $w={71}><ZoomGlyph /></ZoomCell>
              <ZoomCell $w={73} $muted>5</ZoomCell>
              <ZoomCell $w={72}><ZoomGlyph plus /></ZoomCell>
            </ZoomBox>
            <Attribution>
              © <Credit>CARTO</Credit>, © <Credit>OpenStreetMap</Credit> contributors
            </Attribution>
          </MapCard>
        </Main>
      </Body>
    </Page>
  );
}
